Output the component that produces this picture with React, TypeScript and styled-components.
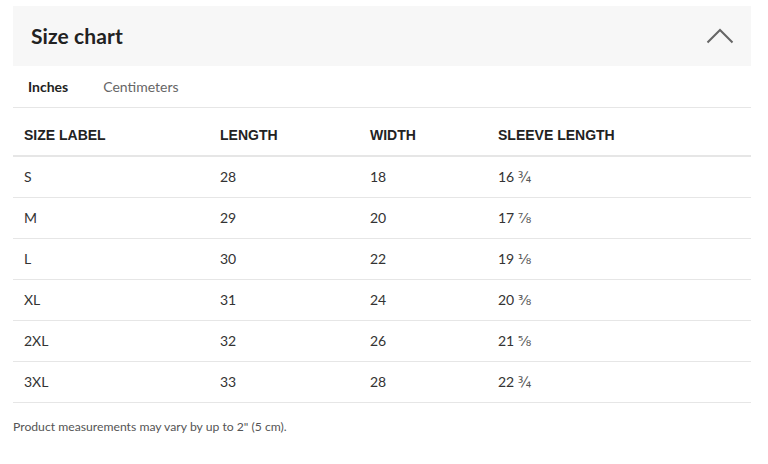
import React from "react";
import styled, { createGlobalStyle } from "styled-components";

const Global = createGlobalStyle`
  html, body { margin: 0; padding: 0; background: #fff; }
  body { font-family: Lato, "Noto Sans", Arial, sans-serif; color: #222; }
`;

const Wrap = styled.div`
  padding: 6px 17px 0 13px;
  width: 768px;
  box-sizing: border-box;
`;

const Header = styled.div`
  height: 60px;
  background: #f7f7f7;
  display: flex;
  align-items: center;
  justify-content: space-between;
  padding: 0 17px 2px 18px;
  box-sizing: border-box;
`;

const Title = styled.h2`
  margin: 0;
  font-size: 21px;
  font-weight: 700;
  color: #222;
  letter-spacing: 0.1px;
`;

const Chevron = styled.svg`
  margin-top: 2px;
`;

const Tabs = styled.div`
  display: flex;
  height: 41px;
  align-items: center;
  padding-left: 15px;
  gap: 35px;
  border-bottom: 1px solid #e6e6e6;
`;

const Tab = styled.span<{ $active?: boolean }>`
  font-size: 14px;
  font-weight: ${(p) => (p.$active ? 700 : 400)};
  color: ${(p) => (p.$active ? "#222" : "#666")};
`;

const Row = styled.div<{ $head?: boolean }>`
  display: grid;
  grid-template-columns: 196px 150px 128px 1fr;
  align-items: center;
  height: ${(p) => (p.$head ? "47px" : "40px")};
  border-bottom: ${(p) => (p.$head ? "2px solid #e6e6e6" : "1px solid #e6e6e6")};
`;

const Cell = styled.div<{ $head?: boolean }>`
  padding-left: 11px;
  font-family: ${(p) => (p.$head ? '"Liberation Sans", Arial, sans-serif' : 'Lato, "Noto Sans", sans-serif')};
  font-size: 14px;
  font-weight: ${(p) => (p.$head ? 700 : 400)};
  color: ${(p) => (p.$head ? "#222" : "#333")};
  padding-top: ${(p) => (p.$head ? "6px" : "0")};
  padding-bottom: ${(p) => (p.$head ? "0" : "2px")};
`;

const Frac = styled.span`
  font-family: "DejaVu Sans", sans-serif;
  font-size: 14px;
  color: #555;
`;

const Note = styled.p`
  margin: 16px 0 0;
  font-size: 12.2px;
  color: #555;
`;

const rows: [string, string, string, string, string][] = [
  ["S", "28", "18", "16", "¾"],
  ["M", "29", "20", "17", "⅞"],
  ["L", "30", "22", "19", "⅛"],
  ["XL", "31", "24", "20", "⅜"],
  ["2XL", "32", "26", "21", "⅝"],
  ["3XL", "33", "28", "22", "¾"],
];

export default function App() {
  return (
    <Wrap>
      <Global />
      <Header>
        <Title>Size chart</Title>
        <Chevron width="28" height="16" viewBox="0 0 28 16" fill="none">
          <path d="M1.5 14.5 L14 2 L26.5 14.5" stroke="#666" strokeWidth="2" />
        </Chevron>
      </Header>
      <Tabs>
        <Tab $active>Inches</Tab>
        <Tab>Centimeters</Tab>
      </Tabs>
      <Row $head>
        <Cell $head>SIZE LABEL</Cell>
        <Cell $head>LENGTH</Cell>
        <Cell $head>WIDTH</Cell>
        <Cell $head>SLEEVE LENGTH</Cell>
      </Row>
      {rows.map((r) => (
        <Row key={r[0]}>
          <Cell>{r[0]}</Cell>
          <Cell>{r[1]}</Cell>
          <Cell>{r[2]}</Cell>
          <Cell>
            {r[3]} <Frac>{r[4]}</Frac>
          </Cell>
        </Row>
      ))}
      <Note>Product measurements may vary by up to 2" (5 cm).</Note>
    </Wrap>
  );
}
